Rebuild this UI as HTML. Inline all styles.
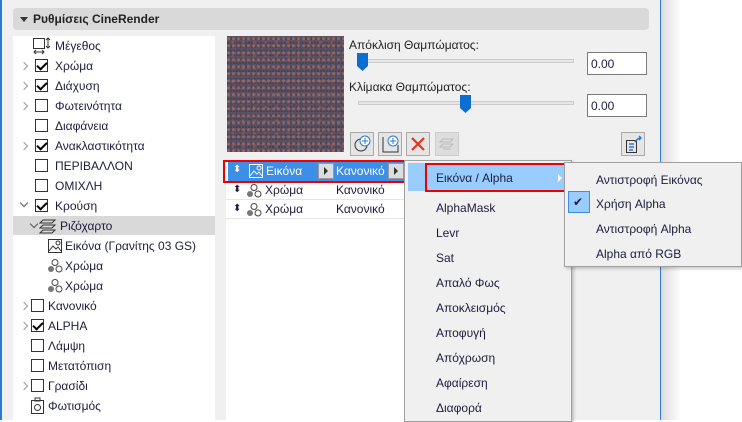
<!DOCTYPE html>
<html><head><meta charset="utf-8"><style>
*{box-sizing:border-box;margin:0;padding:0}
body{width:742px;height:420px;overflow:hidden;background:#fff;font-family:"Segoe UI","Liberation Sans","DejaVu Sans",sans-serif;font-size:12px;color:#1c1c3c;position:relative}
.a{position:absolute}
.t{position:absolute;white-space:nowrap;line-height:16px}
.cb{position:absolute;width:13px;height:13px;border:1px solid #333;background:#fff}
.cb.c::after{content:"";position:absolute;left:3px;top:0px;width:4px;height:8px;border:solid #000;border-width:0 2px 2px 0;transform:rotate(45deg)}
.ch{position:absolute;width:6px;height:6px;border:solid #999;border-width:1px 1px 0 0;transform:rotate(45deg)}
.cd{position:absolute;width:6px;height:6px;border:solid #555;border-width:0 1px 1px 0;transform:rotate(45deg)}
.mi{position:absolute;white-space:nowrap;line-height:16px;font-size:12px}
</style></head><body>
<div class="a" style="left:0;top:0;width:661px;height:420px;background:#f0f0f0"></div>
<div class="a" style="left:0;top:0;width:2px;height:420px;background:#2b7bd6"></div>
<div class="a" style="left:660px;top:0;width:1px;height:420px;background:#2b7bd6"></div>
<div class="a" style="left:661px;top:0;width:20px;height:420px;background:linear-gradient(90deg,#dcdcdc,#fff)"></div>
<!-- header -->
<div class="a" style="left:13px;top:8px;width:636px;height:22px;background:#d9d9d9;border-radius:4px"></div>
<div class="a" style="left:20px;top:17px;width:0;height:0;border-left:4px solid transparent;border-right:4px solid transparent;border-top:5px solid #333"></div>
<div class="t" style="left:33px;top:11px;font-weight:bold;color:#222">Ρυθμίσεις CineRender</div>
<!-- tree -->
<div class="a" style="left:13px;top:36px;width:202px;height:384px;background:#fff"></div>
<div class="a" style="left:13px;top:216px;width:202px;height:19px;background:#d9d9d9"></div>
<svg class="a" style="left:32px;top:37px" width="20" height="18"><rect x="1.5" y="1.5" width="11" height="10" fill="none" stroke="#333"/><path d="M16 1v10M14 3l2-2 2 2M14 9l2 2 2-2M2 15h10M4 13l-2 2 2 2M10 13l2 2-2 2" stroke="#333" fill="none"/></svg>
<div class="t" style="left:55px;top:38px">Μέγεθος</div>
<div class="ch" style="left:21px;top:63px"></div><div class="cb c" style="left:35px;top:59px"></div><div class="t" style="left:55px;top:58px">Χρώμα</div>
<div class="ch" style="left:21px;top:83px"></div><div class="cb c" style="left:35px;top:79px"></div><div class="t" style="left:55px;top:78px">Διάχυση</div>
<div class="ch" style="left:21px;top:103px"></div><div class="cb" style="left:35px;top:99px"></div><div class="t" style="left:55px;top:98px">Φωτεινότητα</div>
<div class="cb" style="left:35px;top:119px"></div><div class="t" style="left:55px;top:118px">Διαφάνεια</div>
<div class="ch" style="left:21px;top:143px"></div><div class="cb c" style="left:35px;top:139px"></div><div class="t" style="left:55px;top:138px">Ανακλαστικότητα</div>
<div class="cb" style="left:35px;top:159px"></div><div class="t" style="left:55px;top:158px">ΠΕΡΙΒΑΛΛΟΝ</div>
<div class="cb" style="left:35px;top:179px"></div><div class="t" style="left:55px;top:178px">ΟΜΙΧΛΗ</div>
<div class="cd" style="left:21px;top:200px"></div><div class="cb c" style="left:35px;top:199px"></div><div class="t" style="left:55px;top:198px">Κρούση</div>
<div class="cd" style="left:31px;top:221px"></div>
<svg class="a" style="left:39px;top:218px" width="18" height="16"><path d="M4 2h12l-3 3H1zM4 7h12l-3 3H1zM4 12h12l-3 3H1z" fill="none" stroke="#333"/></svg>
<div class="t" style="left:60px;top:218px">Ριζόχαρτο</div>
<svg class="a" style="left:47px;top:238px" width="16" height="16"><rect x="1.5" y="1.5" width="13" height="13" fill="none" stroke="#333"/><path d="M2 13l4-5 3 3 2-2 3 4" fill="none" stroke="#333"/><circle cx="11" cy="5" r="2" fill="none" stroke="#333"/></svg>
<div class="t" style="left:65px;top:238px">Εικόνα (Γρανίτης 03 GS)</div>
<svg class="a" style="left:47px;top:258px" width="16" height="16"><circle cx="8" cy="4.5" r="3" fill="none" stroke="#444"/><circle cx="4" cy="11" r="3" fill="#777"/><circle cx="12" cy="11" r="3" fill="none" stroke="#444"/></svg>
<div class="t" style="left:65px;top:258px">Χρώμα</div>
<svg class="a" style="left:47px;top:278px" width="16" height="16"><circle cx="8" cy="4.5" r="3" fill="none" stroke="#444"/><circle cx="4" cy="11" r="3" fill="#777"/><circle cx="12" cy="11" r="3" fill="none" stroke="#444"/></svg>
<div class="t" style="left:65px;top:278px">Χρώμα</div>
<div class="ch" style="left:21px;top:303px"></div><div class="cb" style="left:31px;top:299px"></div><div class="t" style="left:48px;top:298px">Κανονικό</div>
<div class="ch" style="left:21px;top:323px"></div><div class="cb c" style="left:31px;top:319px"></div><div class="t" style="left:48px;top:318px">ALPHA</div>
<div class="cb" style="left:31px;top:339px"></div><div class="t" style="left:48px;top:338px">Λάμψη</div>
<div class="cb" style="left:31px;top:359px"></div><div class="t" style="left:48px;top:358px">Μετατόπιση</div>
<div class="ch" style="left:21px;top:383px"></div><div class="cb" style="left:31px;top:379px"></div><div class="t" style="left:48px;top:378px">Γρασίδι</div>
<svg class="a" style="left:30px;top:397px" width="16" height="18"><rect x="1.5" y="3.5" width="12" height="13" fill="none" stroke="#333"/><rect x="5" y="1" width="5" height="3" fill="none" stroke="#333"/><circle cx="7.5" cy="10.5" r="3" fill="none" stroke="#333"/></svg>
<div class="t" style="left:48px;top:398px">Φωτισμός</div>
<!-- texture -->
<div class="a" style="left:227px;top:36px;width:117px;height:116px;background:#5e5260;background-image:radial-gradient(circle at 30% 40%,rgba(170,110,95,.8) 0 1px,transparent 2px),radial-gradient(circle at 60% 70%,rgba(70,75,110,.8) 0 1px,transparent 2px),radial-gradient(circle at 50% 50%,rgba(150,100,90,.6) 0 1px,transparent 2px),radial-gradient(circle at 20% 80%,rgba(60,60,80,.7) 0 1px,transparent 2px);background-size:5px 7px,7px 5px,11px 13px,3px 4px"></div>
<div class="t" style="left:349px;top:37px;color:#222">Απόκλιση Θαμπώματος:</div>
<div class="a" style="left:358px;top:59px;width:216px;height:4px;background:#e6e6e6;border:1px solid #ccc"></div>
<svg class="a" style="left:357px;top:53px" width="11" height="19"><path d="M0 0h11v13l-5.5 5L0 13z" fill="#0a6fd1"/></svg>
<div class="a" style="left:587px;top:52px;width:60px;height:23px;background:#fff;border:1px solid #7a7a7a"></div><div class="t" style="left:591px;top:56px">0.00</div>
<div class="t" style="left:349px;top:79px;color:#222">Κλίμακα Θαμπώματος:</div>
<div class="a" style="left:358px;top:101px;width:216px;height:4px;background:#e6e6e6;border:1px solid #ccc"></div>
<svg class="a" style="left:460px;top:95px" width="11" height="19"><path d="M0 0h11v13l-5.5 5L0 13z" fill="#0a6fd1"/></svg>
<div class="a" style="left:587px;top:94px;width:60px;height:23px;background:#fff;border:1px solid #7a7a7a"></div><div class="t" style="left:591px;top:98px">0.00</div>
<!-- buttons -->
<div class="a" style="left:350px;top:132px;width:24px;height:24px;border:1px solid #aaa;background:#e5e5e5"></div>
<svg class="a" style="left:353px;top:134px" width="20" height="20"><circle cx="8" cy="11" r="6" fill="none" stroke="#333"/><circle cx="12" cy="7" r="5" fill="#fff" stroke="#2b7bd6"/><path d="M12 4v6M9 7h6" stroke="#2b7bd6"/></svg>
<div class="a" style="left:378px;top:132px;width:24px;height:24px;border:1px solid #aaa;background:#e5e5e5"></div>
<svg class="a" style="left:381px;top:134px" width="20" height="20"><path d="M2 3v15h15V11" fill="none" stroke="#333"/><circle cx="12" cy="7" r="5" fill="#fff" stroke="#2b7bd6"/><path d="M12 4v6M9 7h6" stroke="#2b7bd6"/></svg>
<div class="a" style="left:406px;top:132px;width:24px;height:24px;border:1px solid #aaa;background:#e5e5e5"></div>
<svg class="a" style="left:411px;top:137px" width="14" height="14"><path d="M1 1l12 12M13 1L1 13" stroke="#e8321e" stroke-width="2.2"/></svg>
<div class="a" style="left:435px;top:132px;width:24px;height:24px;border:1px solid #ccc;background:#ddd"></div>
<svg class="a" style="left:439px;top:136px" width="16" height="16"><path d="M4 3h10l-3 3H1zM4 8h10l-3 3H1zM4 13h8" fill="none" stroke="#bbb"/></svg>
<div class="a" style="left:621px;top:132px;width:24px;height:24px;border:1px solid #aaa;background:#e5e5e5"></div>
<svg class="a" style="left:624px;top:134px" width="20" height="20"><rect x="2.5" y="6.5" width="10" height="12" fill="none" stroke="#333"/><path d="M5 10h5M5 13h5M5 16h4M11 8c2-3 4-4 6-4M15 2l2 2-2 2" fill="none" stroke="#2b7bd6" stroke-width="1.5"/></svg>
<!-- list -->
<div class="a" style="left:226px;top:160px;width:180px;height:260px;background:#fff"></div>
<div class="a" style="left:226px;top:199px;width:180px;height:1px;background:#e5e5e5"></div>
<div class="a" style="left:226px;top:218px;width:180px;height:1px;background:#e5e5e5"></div>
<div class="a" style="left:228px;top:161px;width:177px;height:20px;background:#3c8ee6"></div>
<div class="a" style="left:223px;top:160px;width:185px;height:23px;border:2px solid #e00"></div>
<div class="t" style="left:233px;top:162px;color:#fff;font-size:10px">⬍</div>
<svg class="a" style="left:248px;top:163px" width="16" height="16"><rect x="1.5" y="1.5" width="13" height="13" fill="none" stroke="#fff"/><path d="M2 13l4-5 3 3 2-2 3 4" fill="none" stroke="#fff"/><circle cx="11" cy="5" r="2" fill="none" stroke="#fff"/></svg>
<div class="t" style="left:266px;top:163px;color:#fff">Εικόνα</div>
<div class="a" style="left:318px;top:163px;width:16px;height:16px;background:#ddd;border:1px solid #999"></div><div class="a" style="left:324px;top:167px;border-left:4px solid #333;border-top:4px solid transparent;border-bottom:4px solid transparent"></div>
<div class="t" style="left:336px;top:163px;color:#fff">Κανονικό</div>
<div class="a" style="left:388px;top:163px;width:16px;height:16px;background:#ddd;border:1px solid #999"></div><div class="a" style="left:394px;top:167px;border-left:4px solid #333;border-top:4px solid transparent;border-bottom:4px solid transparent"></div>
<div class="t" style="left:233px;top:182px;font-size:10px">⬍</div>
<svg class="a" style="left:246px;top:183px" width="16" height="16"><circle cx="8" cy="4.5" r="3" fill="none" stroke="#444"/><circle cx="4" cy="11" r="3" fill="#777"/><circle cx="12" cy="11" r="3" fill="none" stroke="#444"/></svg>
<div class="t" style="left:265px;top:182px">Χρώμα</div><div class="t" style="left:336px;top:182px">Κανονικό</div>
<div class="t" style="left:233px;top:201px;font-size:10px">⬍</div>
<svg class="a" style="left:246px;top:202px" width="16" height="16"><circle cx="8" cy="4.5" r="3" fill="none" stroke="#444"/><circle cx="4" cy="11" r="3" fill="#777"/><circle cx="12" cy="11" r="3" fill="none" stroke="#444"/></svg>
<div class="t" style="left:265px;top:201px">Χρώμα</div><div class="t" style="left:336px;top:201px">Κανονικό</div>
<!-- menu 1 -->
<div class="a" style="left:404px;top:160px;width:168px;height:262px;background:#f0f0f0;border:1px solid #a0a0a0;box-shadow:2px 2px 3px rgba(0,0,0,.2)"></div>
<div class="a" style="left:408px;top:163px;width:156px;height:28px;background:#99ccff"></div>
<div class="a" style="left:425px;top:163px;width:141px;height:29px;border:2px solid #e00"></div>
<div class="mi" style="left:436px;top:170px">Εικόνα / Alpha</div>
<div class="a" style="left:558px;top:174px;border-left:4px solid #fff;border-top:4px solid transparent;border-bottom:4px solid transparent"></div>
<div class="mi" style="left:436px;top:200px">AlphaMask</div>
<div class="mi" style="left:436px;top:225px">Levr</div>
<div class="mi" style="left:436px;top:250px">Sat</div>
<div class="mi" style="left:436px;top:275px">Απαλό Φως</div>
<div class="mi" style="left:436px;top:300px">Αποκλεισμός</div>
<div class="mi" style="left:436px;top:325px">Αποφυγή</div>
<div class="mi" style="left:436px;top:350px">Απόχρωση</div>
<div class="mi" style="left:436px;top:375px">Αφαίρεση</div>
<div class="mi" style="left:436px;top:400px">Διαφορά</div>
<!-- menu 2 -->
<div class="a" style="left:564px;top:162px;width:178px;height:105px;background:#f0f0f0;border:1px solid #a0a0a0;box-shadow:2px 2px 3px rgba(0,0,0,.2)"></div>
<div class="a" style="left:568px;top:191px;width:22px;height:22px;background:#99ccff;border:1px solid #3c8ee6"></div>
<div class="t" style="left:573px;top:194px;font-size:12px">✔</div>
<div class="mi" style="left:596px;top:172px">Αντιστροφή Εικόνας</div>
<div class="mi" style="left:596px;top:196px">Χρήση Alpha</div>
<div class="mi" style="left:596px;top:221px">Αντιστροφή Alpha</div>
<div class="mi" style="left:596px;top:246px">Alpha από RGB</div>
</body></html>
